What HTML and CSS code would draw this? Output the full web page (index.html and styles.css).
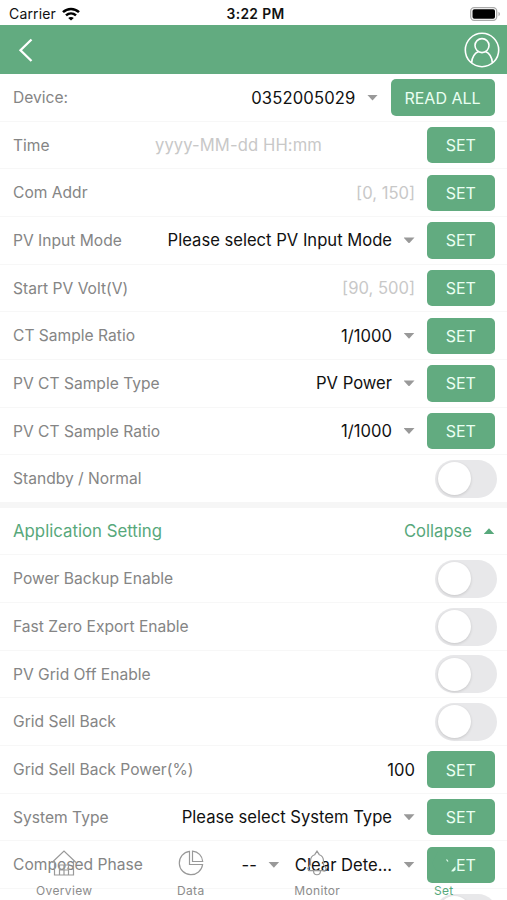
FILE: index.html
```html
<!DOCTYPE html>
<html lang="en">
<head>
<meta charset="utf-8">
<title>Device settings</title>
<link rel="stylesheet" href="styles.css">
</head>
<body>
<div class="screen">
  <div class="status">
    <div class="carrier"><span>Carrier</span>
      <svg width="18" height="14" viewBox="0 0 18 14" fill="none" stroke="#000" stroke-width="2.5"><path d="M1 5.2C5.5.8 12.5.8 17 5.2M4 8.4c2.9-2.7 7.100-2.700 10 0"/><path d="M9 13.600 6.200 10.900c1.600-1.300 4-1.300 5.600 0z" fill="#000" stroke="none"/></svg>
    </div>
    <div class="clock">3:22 PM</div>
    <svg class="battery" width="31" height="14" viewBox="0 0 31 14"><rect x=".7" y=".7" width="26" height="12.600" rx="3.500" fill="#fff" stroke="#aaa" stroke-width="1.300"/><rect x="2.500" y="2.300" width="22.500" height="9.400" rx="1.800"/><path d="M28.500 4.800c2 .8 2 3.600 0 4.400z" fill="#aaa"/></svg>
  </div>
  <header class="nav">
    <svg width="16" height="26" viewBox="0 0 16 26" fill="none" stroke="#fff" stroke-width="2.300"><path d="M13.500 2.500 2.500 13.200l11 10.800"/></svg>
    <svg width="36" height="36" viewBox="0 0 36 36" fill="none" stroke="#fff" stroke-width="1.600"><circle cx="18" cy="18" r="16.700"/><circle cx="18" cy="13.600" r="7"/><path d="M7.600 31c.5-6.600 3.700-10 7-11.400M28.400 31c-.5-6.600-3.700-10-7-11.400"/></svg>
  </header>
  <main>
    <section>
      <div class="row"><span class="label device">Device:</span><span class="value number">0352005029</span><i class="caret"></i><button class="wide">READ ALL</button></div>
      <div class="row"><span class="label time">Time</span><span class="hint date">yyyy-MM-dd HH:mm</span><button>SET</button></div>
      <div class="row"><span class="label">Com Addr</span><span class="hint">[0, 150]</span><button>SET</button></div>
      <div class="row"><span class="label">PV Input Mode</span><span class="value">Please select PV Input Mode</span><i class="caret"></i><button>SET</button></div>
      <div class="row"><span class="label">Start PV Volt(V)</span><span class="hint">[90, 500]</span><button>SET</button></div>
      <div class="row"><span class="label">CT Sample Ratio</span><span class="value">1/1000</span><i class="caret"></i><button>SET</button></div>
      <div class="row"><span class="label">PV CT Sample Type</span><span class="value">PV Power</span><i class="caret"></i><button>SET</button></div>
      <div class="row"><span class="label">PV CT Sample Ratio</span><span class="value">1/1000</span><i class="caret"></i><button>SET</button></div>
      <div class="row last"><span class="label">Standby / Normal</span><span class="switch"></span></div>
    </section>
    <section class="application">
      <div class="row title"><span class="label heading">Application Setting</span><span class="collapse">Collapse</span><i class="caret up"></i></div>
      <div class="row"><span class="label">Power Backup Enable</span><span class="switch"></span></div>
      <div class="row"><span class="label">Fast Zero Export Enable</span><span class="switch"></span></div>
      <div class="row"><span class="label">PV Grid Off Enable</span><span class="switch"></span></div>
      <div class="row"><span class="label">Grid Sell Back</span><span class="switch"></span></div>
      <div class="row"><span class="label">Grid Sell Back Power(%)</span><span class="value">100</span><button>SET</button></div>
      <div class="row"><span class="label">System Type</span><span class="value">Please select System Type</span><i class="caret"></i><button>SET</button></div>
      <div class="row"><span class="label">Composed Phase</span><span class="value">--</span><i class="caret"></i><span class="value detect">Clear Dete...</span><i class="caret"></i><button>SET</button></div>
      <div class="row"><span class="label"></span><span class="switch"></span></div>
    </section>
  </main>
  <nav class="tabs">
    <div class="tab"><svg width="26" height="26" viewBox="0 0 26 26"><path d="M1 12.500 13 1l12 11.500M3.500 11v14h19V11M8.500 25V15h9v10M13 15v10M8.500 20h9"/></svg><span>Overview</span></div>
    <div class="tab"><svg width="26" height="26" viewBox="0 0 26 26"><path d="M11.500 1.400A11.700 11.700 0 1 0 24.600 14.500H11.500zM14.500 1.200v10.300h10.200C24.300 5.800 20.200 1.700 14.500 1.200z"/></svg><span>Data</span></div>
    <div class="tab"><svg width="26" height="26" viewBox="0 0 26 26"><path d="M13 1.200 10.700 4.700C7.600 5.800 6.500 8 6.500 11v3.500L3.800 18.500l1.200 2.200h16l1.200-2.200-2.700-4V11c0-3-1.100-5.200-4.200-6.300zM9.500 21c.3 5 6.700 5 7 0"/></svg><span>Monitor</span></div>
    <div class="tab active"><svg width="26" height="26" viewBox="0 0 26 26"><path d="M7 1h12l6.500 7v13L19 25H7L1 13z" fill="#62ab80" stroke="none"/><path d="m20 21.200 4.500-5V20l-2 1.500z" fill="#e5fff0" stroke="none"/><path d="m15.500 9.500 1.500 2" stroke="#e5fff0"/></svg><span>Set</span></div>
  </nav>
</div>
</body>
</html>
```
FILE: styles.css
```css
* { box-sizing: border-box; }
body { margin: 0; background: #fff; font-family: Inter, "Liberation Sans", sans-serif; }
.screen { position: relative; width: 507px; height: 900px; overflow: hidden; }
.status { height: 25px; display: grid; grid-template-columns: 1fr auto 1fr; align-items: center; padding: 2px 6px 0 9px; color: #111; font-size: 14px; }
.carrier { display: flex; align-items: center; gap: 6px; letter-spacing: .15px; }
.clock { font-weight: 600; font-size: 13.800px; letter-spacing: .35px; padding-left: 0; margin-right: -1px; }
.battery { justify-self: end; }
.nav { height: 49px; background: #62ab80; display: flex; align-items: center; justify-content: space-between; padding: 0 7px 0 18px; }
.row { height: 47.67px; display: flex; align-items: center; padding: .4px 12.500px 0 13px; border-bottom: 1.500px solid #f7f7f7; }
.row.last { border-bottom: 0; height: 46.500px; }
.application { border-top: 6px solid #f6f6f6; }
.label { flex: 1; font-size: 15.600px; color: #858585; white-space: nowrap; }
.value { font-size: 16.600px; color: #111; white-space: nowrap; }
.number { letter-spacing: .15px; }
.hint { font-size: 16.600px; color: #c8c8c8; margin-right: 12px; white-space: nowrap; }
.time { flex: none; width: 142px; }
.date { flex: 1; letter-spacing: .1px; }
.heading { font-size: 16.800px; }
.collapse { font-size: 16.600px; }
.heading, .collapse { color: #57a87b; }
.caret { width: 11px; height: 6px; margin: 0 12.500px 0 11.500px; background: #999; clip-path: polygon(0 0, 100% 0, 50% 100%); }
.caret.up { background: #57a87b; clip-path: polygon(50% 0, 100% 100%, 0 100%); margin-right: 0; }
button { width: 67.500px; height: 36.500px; border: 0; border-radius: 5px; padding: 0; background: #62ab80; color: #eafff2; font: 16px Inter, "Liberation Sans", sans-serif; }
button.wide { width: 104px; }
.row > .value + button { margin-left: 12px; }
.detect { margin-left: 3px; }
.switch { width: 62px; height: 38px; border-radius: 19px; background: #e8e8ea; padding: 2.500px; margin-right: -2.500px; }
.switch::before { content: ""; display: block; width: 33px; height: 33px; border-radius: 50%; background: #fff; box-shadow: 0 1px 3px rgba(0,0,0,.15); }
.tabs { position: absolute; left: 1px; right: 0; bottom: 0; height: 50px; display: grid; grid-template-columns: repeat(4, 1fr); }
.tab { display: flex; flex-direction: column; align-items: center; gap: 7px; color: #8c8c8c; font-size: 12px; line-height: 16px; letter-spacing: .35px; }
.tab svg { fill: none; stroke: #999; stroke-width: 1.200; }
.tab.active { color: #57a87b; }
```
